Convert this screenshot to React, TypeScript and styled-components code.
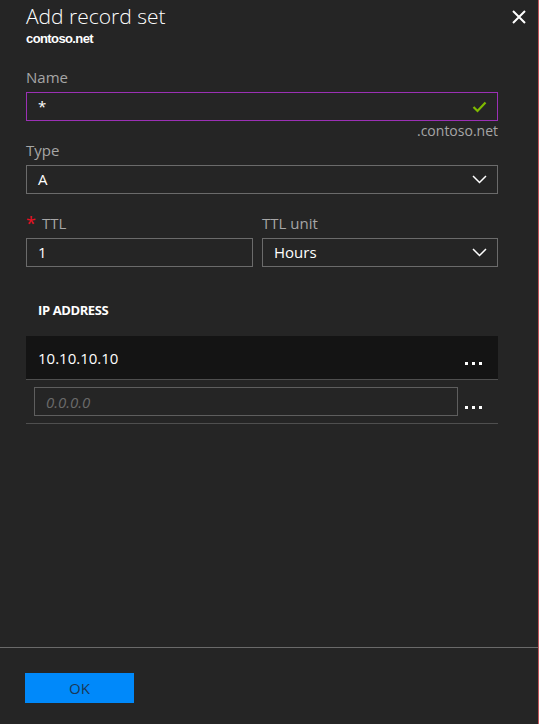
import styled, { createGlobalStyle } from "styled-components"

const GlobalStyle = createGlobalStyle`
    html, body {
        margin: 0;
        padding: 0;
        background: #252525;
    }
    * {
        box-sizing: border-box;
    }
`

const Blade = styled.div`
    width: 539px;
    height: 724px;
    background: #252525;
    border-right: 1px solid #c4575c;
    display: flex;
    flex-direction: column;
    font-family: "Open Sans", "Noto Sans", sans-serif;
    color: #ffffff;
`

const Header = styled.div`
    display: flex;
    justify-content: space-between;
    align-items: flex-start;
    padding: 4px 12px 0 26px;
`

const Title = styled.h1`
    margin: 0;
    font-size: 21px;
    line-height: 24px;
    font-weight: 300;
    color: #ffffff;
`

const Subtitle = styled.div`
    font-family: "Liberation Sans", Arial, sans-serif;
    font-size: 13px;
    line-height: 21px;
    font-weight: 700;
    letter-spacing: -0.6px;
`

const CloseButton = styled.button`
    background: none;
    border: none;
    padding: 0;
    margin-top: 6px;
    width: 14px;
    height: 14px;
    display: flex;
    cursor: pointer;
`

const Body = styled.div`
    display: flex;
    flex-direction: column;
    padding: 18px 40px 0 26px;
`

const Field = styled.div`
    display: flex;
    flex-direction: column;
    min-width: 0;
`

const Label = styled.label`
    font-size: 15px;
    line-height: 20px;
    color: #a6a6a6;
    margin-bottom: 5px;
    display: flex;
    gap: 6px;
`

const Required = styled.span`
    color: #e81123;
    font-size: 18px;
`

const InputBox = styled.div<{ $valid?: boolean }>`
    height: 29px;
    border: 1px solid ${p => (p.$valid ? "#9b30b5" : "#6b6b6b")};
    display: flex;
    align-items: center;
    justify-content: space-between;
    padding: 0 10px 0 11px;
    font-size: 15px;
    line-height: 27px;
    color: #ffffff;
`

const Suffix = styled.div`
    text-align: right;
    font-size: 14px;
    line-height: 19px;
    color: #a6a6a6;
`

const TwoCols = styled.div`
    display: grid;
    grid-template-columns: 227px 1fr;
    column-gap: 9px;
    margin-top: 19px;
`

const SectionTitle = styled.div`
    margin: 34px 0 17px 12px;
    font-size: 13px;
    line-height: 18px;
    font-weight: 700;
    letter-spacing: -0.4px;
`

const Row = styled.div<{ $dark?: boolean }>`
    height: 44px;
    display: flex;
    align-items: center;
    background: ${p => (p.$dark ? "#141414" : "transparent")};
    border-bottom: 1px solid #4f4f4f;
    padding: 0 15px 0 ${p => (p.$dark ? 12 : 8)}px;
    font-size: 15px;
    line-height: 20px;
`

const RowText = styled.span`
    flex: 1;
`

const IpInput = styled.div`
    width: 424px;
    height: 29px;
    border: 1px solid #5e5e5e;
    padding: 0 11px;
    display: flex;
    align-items: center;
    font-size: 15px;
    font-style: italic;
    color: #6a6a6a;
`

const Dots = styled.svg`
    margin: 11px 0 0 auto;
`

const Footer = styled.div`
    margin-top: auto;
    border-top: 1px solid #6a6a6a;
    padding: 25px 0 21px 25px;
`

const OkButton = styled.button`
    width: 109px;
    height: 30px;
    border: none;
    background: #0089fa;
    color: #1b3856;
    font-family: "Open Sans", "Noto Sans", sans-serif;
    font-size: 15px;
    padding: 0;
`

const Chevron = () => (
    <svg width="15" height="9" viewBox="0 0 15 9">
        <path d="M1 1 L7.5 7.5 L14 1" fill="none" stroke="#ffffff" strokeWidth="1.5" />
    </svg>
)

const Check = () => (
    <svg width="15" height="12" viewBox="0 0 15 12">
        <path d="M1.5 6 L5.5 10 L13.5 1.5" fill="none" stroke="#7fba00" strokeWidth="2.2" />
    </svg>
)

const More = () => (
    <Dots width="18" height="3" viewBox="0 0 18 3">
        <rect x="0" y="0" width="3" height="3" fill="#ffffff" />
        <rect x="7" y="0" width="3" height="3" fill="#ffffff" />
        <rect x="14" y="0" width="3" height="3" fill="#ffffff" />
    </Dots>
)

export default function App() {
    return <>
        <GlobalStyle />
        <Blade>
            <Header>
                <div>
                    <Title>Add record set</Title>
                    <Subtitle>contoso.net</Subtitle>
                </div>
                <CloseButton aria-label="Close">
                    <svg width="14" height="14" viewBox="0 0 14 14">
                        <path d="M1 1 L13 13 M13 1 L1 13" stroke="#ffffff" strokeWidth="2" />
                    </svg>
                </CloseButton>
            </Header>

            <Body>
                <Field>
                    <Label>Name</Label>
                    <InputBox $valid>
                        <span>*</span>
                        <Check />
                    </InputBox>
                    <Suffix>.contoso.net</Suffix>
                </Field>

                <Field>
                    <Label>Type</Label>
                    <InputBox>
                        <span>A</span>
                        <Chevron />
                    </InputBox>
                </Field>

                <TwoCols>
                    <Field>
                        <Label><Required>*</Required>TTL</Label>
                        <InputBox>
                            <span>1</span>
                        </InputBox>
                    </Field>
                    <Field>
                        <Label>TTL unit</Label>
                        <InputBox>
                            <span>Hours</span>
                            <Chevron />
                        </InputBox>
                    </Field>
                </TwoCols>

                <SectionTitle>IP ADDRESS</SectionTitle>

                <Row $dark>
                    <RowText>10.10.10.10</RowText>
                    <More />
                </Row>
                <Row>
                    <IpInput>0.0.0.0</IpInput>
                    <More />
                </Row>
            </Body>

            <Footer>
                <OkButton>OK</OkButton>
            </Footer>
        </Blade>
    </>
}
